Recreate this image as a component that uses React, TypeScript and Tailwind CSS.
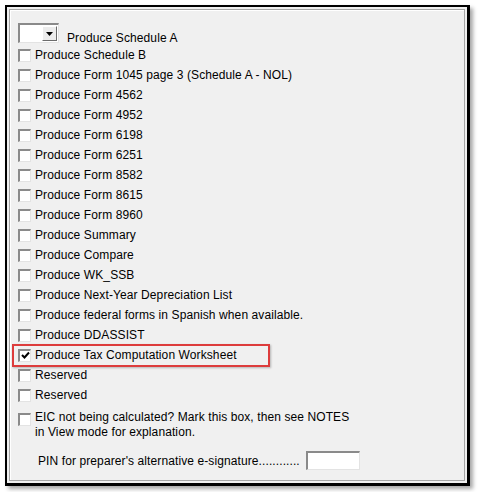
import React from "react";

const rows = [
  "Produce Schedule B",
  "Produce Form 1045 page 3 (Schedule A - NOL)",
  "Produce Form 4562",
  "Produce Form 4952",
  "Produce Form 6198",
  "Produce Form 6251",
  "Produce Form 8582",
  "Produce Form 8615",
  "Produce Form 8960",
  "Produce Summary",
  "Produce Compare",
  "Produce WK_SSB",
  "Produce Next-Year Depreciation List",
  "Produce federal forms in Spanish when available.",
  "Produce DDASSIST",
];

const Checkbox = ({ checked }: { checked?: boolean }) => (
  <div className="w-[13px] h-[13px] shrink-0 bg-white border-t-2 border-l-2 border-t-[#8a8a8a] border-l-[#8a8a8a] border-r border-b border-r-[#e3e3e3] border-b-[#e3e3e3] flex items-center justify-center">
    {checked && (
      <svg width="9" height="9" viewBox="0 0 9 9">
        <path d="M1 4 L3.5 6.5 L8 1.5" stroke="#000" strokeWidth="2" fill="none" />
      </svg>
    )}
  </div>
);

const Row = ({ label }: { label: string }) => (
  <div className="h-5 flex items-center gap-[4px]">
    <Checkbox />
    <span className="tracking-[0.1px]">{label}</span>
  </div>
);

export default function App() {
  return (
    <div
      className="w-[479px] h-[492px] bg-white pl-[5px] pt-[5px] text-[12px] text-black"
      style={{ fontFamily: '"Liberation Sans", Arial, sans-serif' }}
    >
      <div className="w-[465px] h-[481px] bg-[#f0f0f0] border-l-2 border-t-2 border-r-[3px] border-b-[3px] border-black shadow-[3px_3px_4px_rgba(0,0,0,0.35)] p-[2px]">
        <div className="h-full border border-[#a5a5a5] shadow-[inset_1px_1px_0_#ffffff] pl-[8px] pt-[13px]">
          {/* dropdown row */}
          <div className="flex items-end gap-[8px] h-[20px]">
            <div className="w-[41px] h-[20px] bg-white border-t-2 border-l-2 border-t-[#8a8a8a] border-l-[#8a8a8a] border-r border-b border-r-[#e3e3e3] border-b-[#e3e3e3] flex justify-end items-center pr-[1px]">
              <div className="w-[15px] h-[15px] bg-[#ececec] border border-t-white border-l-white border-r-[#6b6b6b] border-b-[#6b6b6b] flex items-center justify-center">
                <svg width="7" height="4" viewBox="0 0 7 4">
                  <path d="M0 0 H7 L3.5 4 Z" fill="#000" />
                </svg>
              </div>
            </div>
            <span className="leading-none mb-[-1px] tracking-[0.1px]">Produce Schedule A</span>
          </div>
          <div className="mt-[2px]">
            {rows.map((r) => (
              <Row key={r} label={r} />
            ))}
            <div className="h-5 flex items-center">
              <div className="ml-[-6px] h-[23px] w-[258px] border-2 border-[#dd3c3c] shadow-[1px_1px_2px_rgba(0,0,0,0.25)] flex items-center gap-[4px] pl-[4px]">
                <Checkbox checked />
                <span className="tracking-[0.1px]">Produce Tax Computation Worksheet</span>
              </div>
            </div>
            <Row label="Reserved" />
            <Row label="Reserved" />
          </div>
          <div className="mt-[5px] flex gap-[4px] items-start">
            <div className="mt-[3px]">
              <Checkbox />
            </div>
            <div className="leading-[15px] tracking-[0.1px]">
              <div>EIC not being calculated? Mark this box, then see NOTES</div>
              <div>in View mode for explanation.</div>
            </div>
          </div>
          <div className="mt-[11px] pl-[20px] flex items-center gap-[6px]">
            <span className="tracking-[0.1px]">PIN for preparer's alternative e-signature............</span>
            <div className="w-[54px] h-[19px] bg-white border-t-2 border-l-2 border-t-[#8a8a8a] border-l-[#8a8a8a] border-r border-b border-r-[#e3e3e3] border-b-[#e3e3e3]" />
          </div>
        </div>
      </div>
    </div>
  );
}
